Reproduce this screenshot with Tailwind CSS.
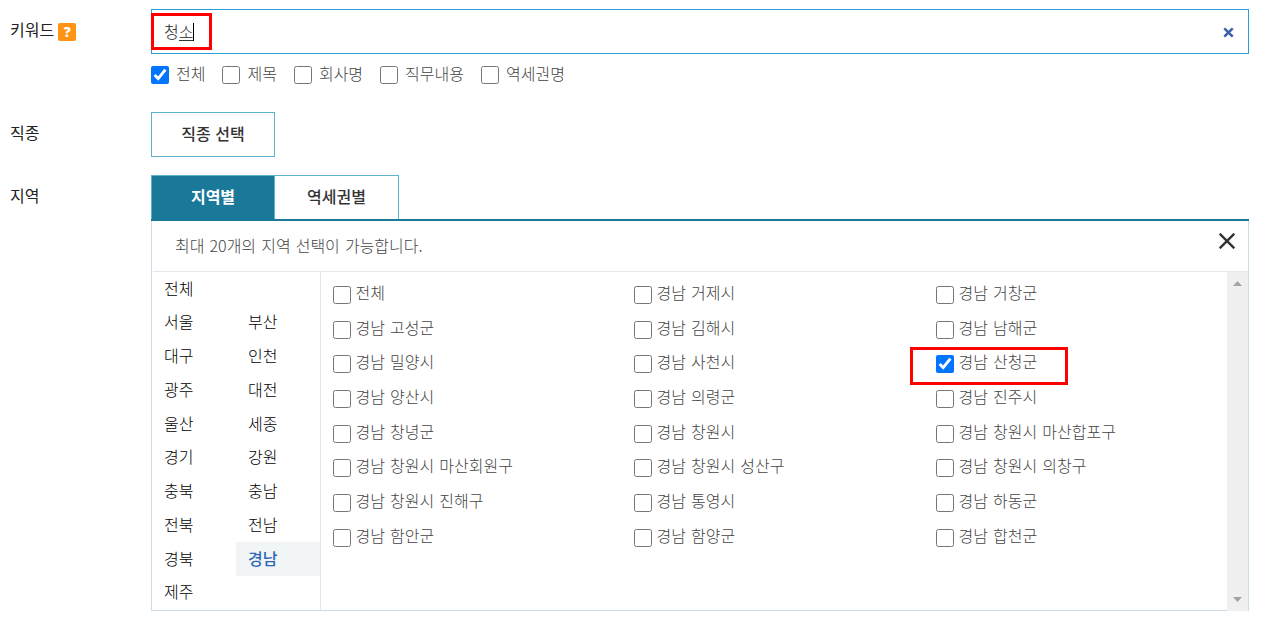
<!DOCTYPE html>
<html lang="ko">
<head>
    <meta charset="UTF-8">
    <meta name="viewport" content="width=device-width, initial-scale=1.0">
    <title>채용정보 검색</title>
    <script src="https://cdn.jsdelivr.net/npm/@tailwindcss/browser@4"></script>
</head>
<body class="h-[623px] overflow-hidden bg-white pt-[9px] pl-[10px] font-['Noto_Sans_CJK_KR',sans-serif] text-base leading-6 font-light text-[#444] [word-spacing:0.6px]">

<!-- Keyword -->
<div class="flex h-[103px]">
    <div class="flex w-[141px] items-start gap-1 pt-[8px] font-normal text-[#222]">
        <span>키워드</span>
        <span class="mt-[6px] flex size-[18px] items-center justify-center rounded-[2px] bg-[#ff9314] font-['Open_Sans',sans-serif] text-[14px] leading-none font-extrabold text-white">?</span>
    </div>
    <div class="w-[1098px]">
        <div class="relative flex h-[45px] items-center justify-between border border-[#2a9fd6] pr-[14px] pl-3">
            <div class="flex h-[18px] items-center text-[#222]">
                <span class="h-[18px] leading-[17px]">청</span><span class="h-[18px] border-b border-[#333] leading-[17px]">소</span><span class="h-[18px] w-px bg-black"></span>
            </div>
            <svg class="mt-[2px] size-[11px]" viewBox="0 0 11 11" fill="none" stroke="#3a62a8" stroke-width="2.6"><path d="M1.300 1.300l8.400 8.400M9.700 1.300l-8.400 8.400"/></svg>
            <div class="absolute top-[3px] -left-px h-[37px] w-[61px] border-[3px] border-[#f00]"></div>
        </div>
        <div class="mt-[7px] flex gap-[17px]" id="scopeList"></div>
    </div>
</div>

<!-- Job type -->
<div class="flex h-[63px]">
    <div class="w-[141px] pt-[8px] font-normal text-[#222]">직종</div>
    <button class="h-[45px] w-[124px] border border-[#5fb2cd] pb-[4px] font-medium text-[#333]">직종 선택</button>
</div>

<!-- Region -->
<div class="flex">
    <div class="w-[141px] pt-[8px] font-normal text-[#222]">지역</div>
    <div class="w-[1098px]">
        <div class="flex h-[46px] border-b-2 border-[#1a7898]">
            <button class="w-[124px] border border-b-0 border-[#5fb2cd] bg-[#1a7898] pb-[4px] font-bold text-white">지역별</button>
            <button class="w-[124px] border border-b-0 border-l-0 border-[#5fb2cd] pb-[4px] font-medium text-[#333]">역세권별</button>
        </div>
        <div class="h-[390px] border border-t-0 border-[#cddde8]">
            <div class="ml-px flex h-[51px] justify-between border-b border-[#e2e8ee] pr-[13px] pl-[22px]">
                <p class="pt-[12px]">최대 20개의 지역 선택이 가능합니다.</p>
                <svg class="mt-[12px] size-4" viewBox="0 0 16 16" fill="none" stroke="#333" stroke-width="2.4"><path d="M.7.7l14.6 14.6M15.3.7L.7 15.3"/></svg>
            </div>
            <div class="flex h-[338px]">
                <div id="regionList" class="grid w-[169px] auto-rows-[33.75px] grid-cols-[84px_84px] border-r border-[#dfe7ef] text-black"></div>
                <div class="relative w-[906px] pt-[4px] pl-3">
                    <div id="cityList" class="grid auto-rows-[34.7px] grid-cols-[301px_302px_291px]"></div>
                    <div class="absolute top-[75px] left-[589px] h-[38px] w-[158px] border-[3px] border-[#f00]"></div>
                </div>
                <div class="flex h-[339px] w-[21px] flex-col items-center justify-between bg-[#f0f0f0] pt-[9px] pb-[9px]">
                    <svg class="h-[5px] w-[9px]" viewBox="0 0 9 5" fill="#a3a3a3"><path d="M0 5L4.500 0 9 5z"/></svg>
                    <svg class="h-[5px] w-[9px]" viewBox="0 0 9 5" fill="#a3a3a3"><path d="M0 0h9L4.500 5z"/></svg>
                </div>
            </div>
        </div>
    </div>
</div>

<script>
    const scopes = ['전체', '제목', '회사명', '직무내용', '역세권명'];
    // Empty string keeps the second column free next to "전체"
    const regions = ['전체', '', '서울', '부산', '대구', '인천', '광주', '대전', '울산', '세종', '경기', '강원', '충북', '충남', '전북', '전남', '경북', '경남', '제주'];
    const cities = [
        '전체', '경남 거제시', '경남 거창군',
        '경남 고성군', '경남 김해시', '경남 남해군',
        '경남 밀양시', '경남 사천시', '경남 산청군',
        '경남 양산시', '경남 의령군', '경남 진주시',
        '경남 창녕군', '경남 창원시', '경남 창원시 마산합포구',
        '경남 창원시 마산회원구', '경남 창원시 성산구', '경남 창원시 의창구',
        '경남 창원시 진해구', '경남 통영시', '경남 하동군',
        '경남 함안군', '경남 함양군', '경남 합천군'
    ];

    document.getElementById('scopeList').innerHTML = scopes.map((name) => `
        <label class="flex gap-[7px]">
            <input type="checkbox" class="mt-[5px] size-[18px]" ${name === '전체' ? 'checked' : ''}>
            <span>${name}</span>
        </label>
    `).join('');

    document.getElementById('regionList').innerHTML = regions.map((name) => name === '경남'
        ? `<a class="bg-[#f1f5f6] pt-[4px] pl-3 font-medium text-[#2f66b3]">${name}</a>`
        : `<a class="pt-[3.6px] pl-3">${name}</a>`
    ).join('');

    document.getElementById('cityList').innerHTML = cities.map((name) => `
        <label class="flex gap-[4.5px] pt-[4px]">
            <input type="checkbox" class="mt-[6px] size-[18px]" ${name === '경남 산청군' ? 'checked' : ''}>
            <span>${name}</span>
        </label>
    `).join('');
</script>
</body>
</html>
